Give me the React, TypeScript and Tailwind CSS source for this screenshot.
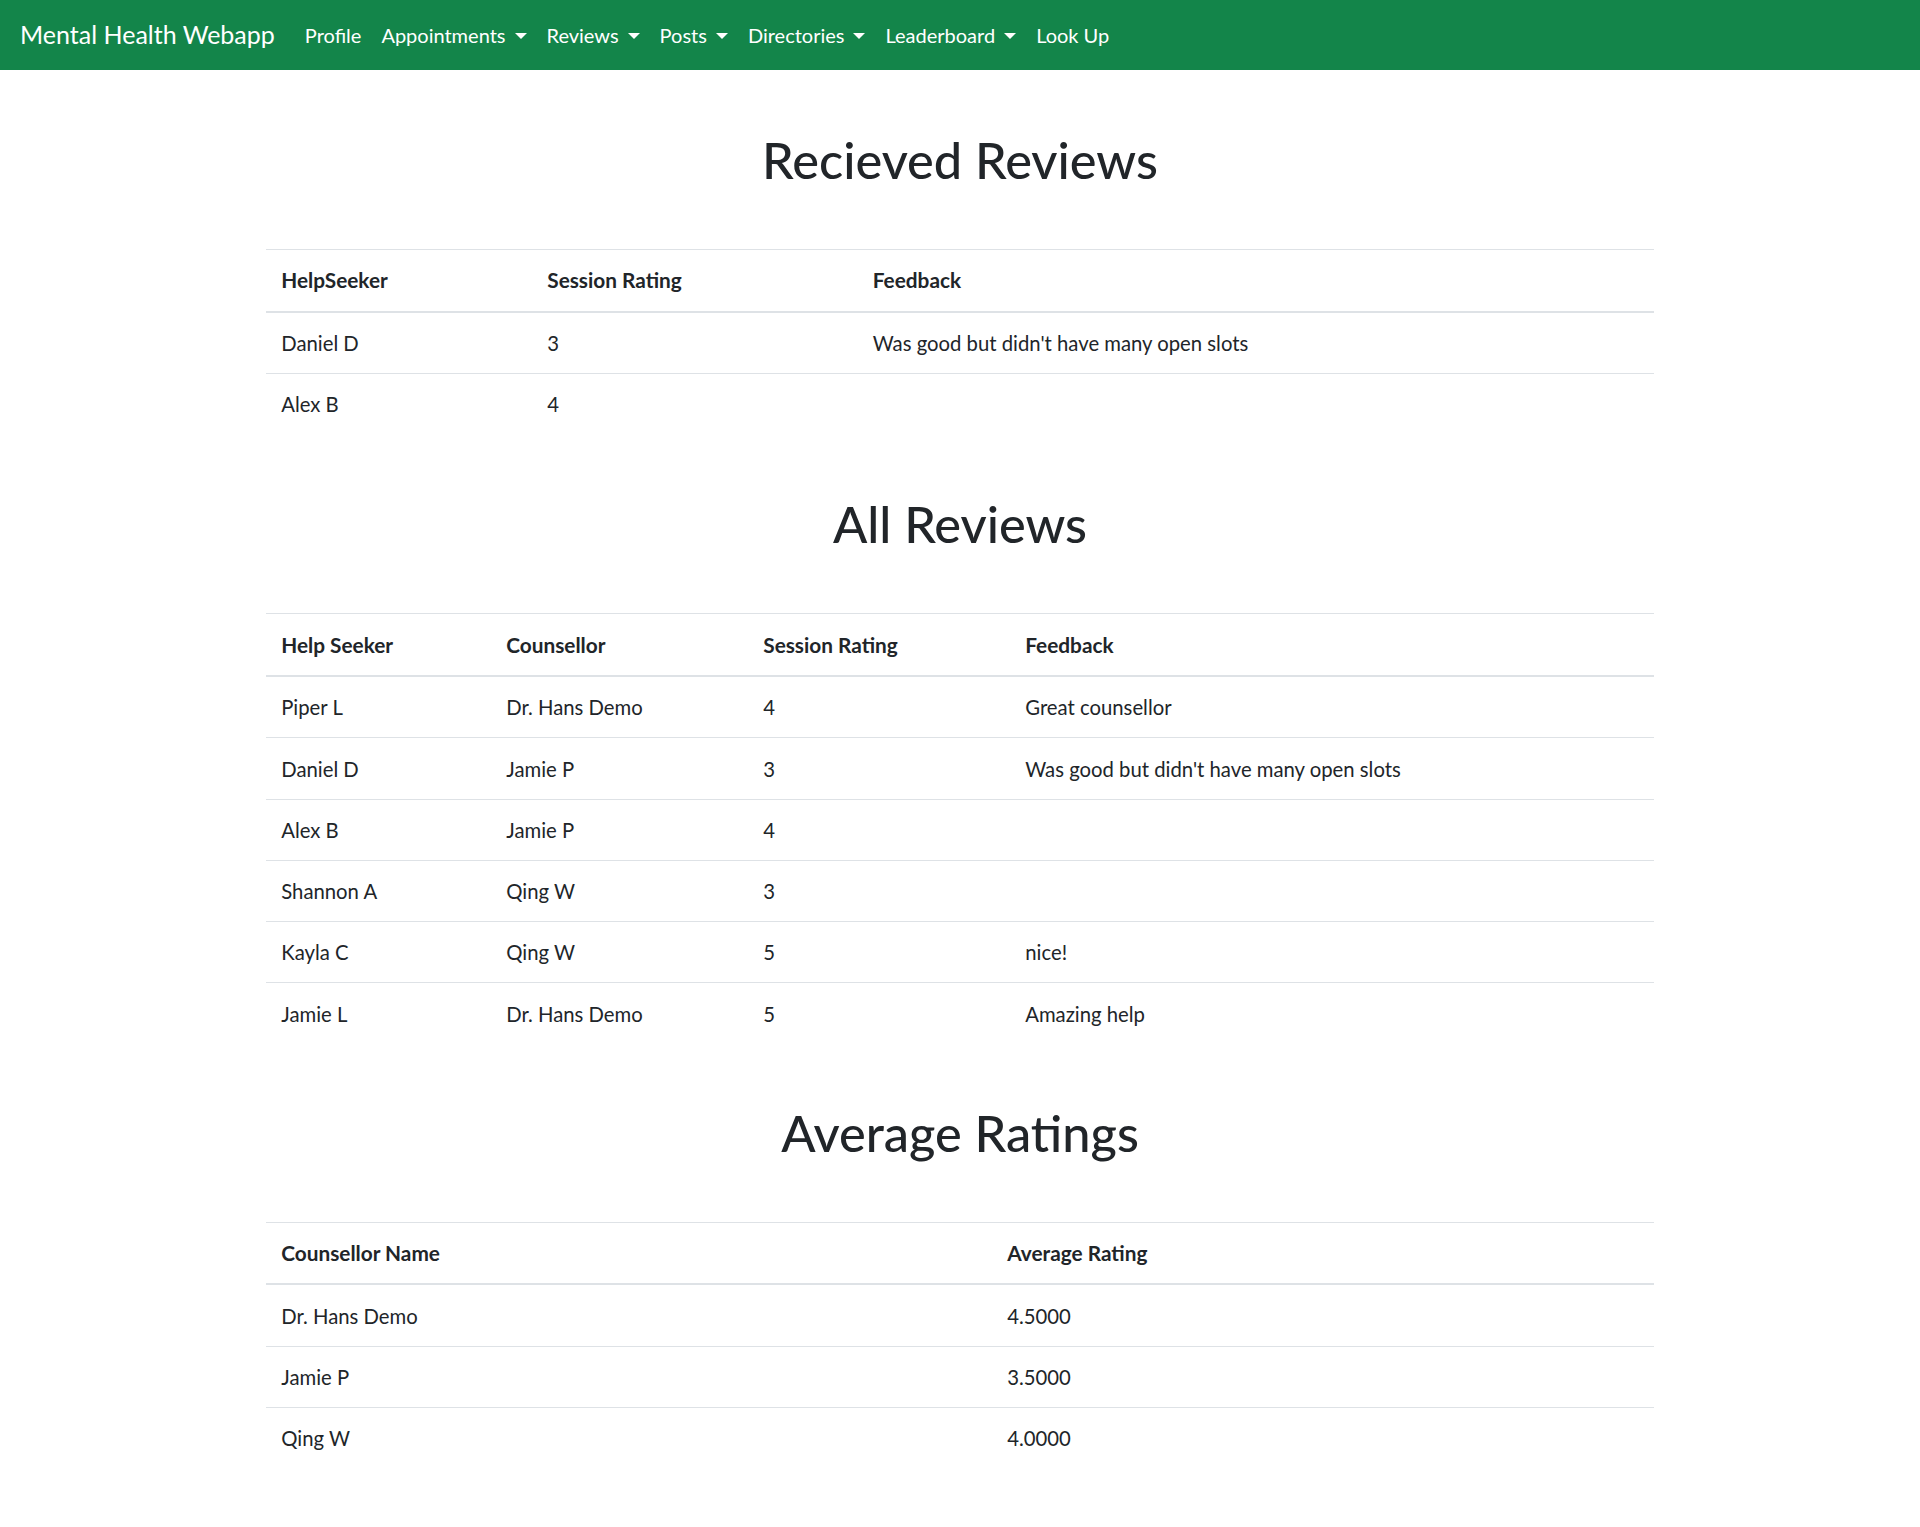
import React from 'react';

type NavLinkProps = {
  title: string;
  dropdown?: boolean;
};

const NavLink = ({ title, dropdown }: NavLinkProps) => {
  return (
    <li>
      <a href="#" className="flex items-center px-[10px] py-[10px] text-[20px] leading-[30px] text-white">
        {title}
        {dropdown && (
          <span className="ml-[9px] mt-[2px] inline-block h-0 w-0 border-x-[6px] border-t-[6px] border-x-transparent border-t-white"></span>
        )}
      </a>
    </li>
  );
};

type Column = { title: string; width?: string };

type ReviewTableProps = {
  columns: Column[];
  rows: string[][];
};

const ReviewTable = ({ columns, rows }: ReviewTableProps) => {
  return (
    <table className="w-full table-fixed border-collapse text-left text-[20.3px] leading-[30px] text-[#212529]">
      <thead>
        <tr>
          {columns.map((col) => (
            <th
              key={col.title}
              className={`border-t border-b-2 border-t-[#dee2e6] border-b-[#dee2e6] px-[15px] py-[15.375px] text-[20.8px] font-bold ${col.width ?? ''}`}
            >
              {col.title}
            </th>
          ))}
        </tr>
      </thead>
      <tbody>
        {rows.map((row, i) => (
          <tr key={i}>
            {row.map((cell, j) => (
              <td key={j} className="border-t border-t-[#dee2e6] px-[15px] pt-[15.25px] pb-[15px] font-normal">
                {cell}
              </td>
            ))}
          </tr>
        ))}
      </tbody>
    </table>
  );
};

const Heading = ({ children }: { children: React.ReactNode }) => (
  <h1 className="mb-[59px] text-center text-[50.5px] font-medium leading-[60px] text-[#212529]">{children}</h1>
);

const App = () => {
  const navItems = [
    { title: 'Profile' },
    { title: 'Appointments', dropdown: true },
    { title: 'Reviews', dropdown: true },
    { title: 'Posts', dropdown: true },
    { title: 'Directories', dropdown: true },
    { title: 'Leaderboard', dropdown: true },
    { title: 'Look Up' },
  ];

  return (
    <div className="min-h-[1527px] bg-white font-['Lato','Noto_Sans',sans-serif]">
      <nav className="flex h-[70px] items-center bg-[#13854a] px-[20px] py-[10px]">
        <a href="#" className="mr-[20px] py-[6.25px] text-[25px] leading-[37.5px] text-white">
          Mental Health Webapp
        </a>
        <ul className="flex items-center">
          {navItems.map((item) => (
            <NavLink key={item.title} title={item.title} dropdown={item.dropdown} />
          ))}
        </ul>
      </nav>

      <main className="mx-auto w-[1387.5px] pt-[60px]">
        <section>
          <Heading>Recieved Reviews</Heading>
          <ReviewTable
            columns={[
              { title: 'HelpSeeker', width: 'w-[266px]' },
              { title: 'Session Rating', width: 'w-[325.5px]' },
              { title: 'Feedback' },
            ]}
            rows={[
              ['Daniel D', '3', "Was good but didn't have many open slots"],
              ['Alex B', '4', ''],
            ]}
          />
        </section>

        <section className="mt-[60px]">
          <Heading>All Reviews</Heading>
          <ReviewTable
            columns={[
              { title: 'Help Seeker', width: 'w-[225px]' },
              { title: 'Counsellor', width: 'w-[257px]' },
              { title: 'Session Rating', width: 'w-[262px]' },
              { title: 'Feedback' },
            ]}
            rows={[
              ['Piper L', 'Dr. Hans Demo', '4', 'Great counsellor'],
              ['Daniel D', 'Jamie P', '3', "Was good but didn't have many open slots"],
              ['Alex B', 'Jamie P', '4', ''],
              ['Shannon A', 'Qing W', '3', ''],
              ['Kayla C', 'Qing W', '5', 'nice!'],
              ['Jamie L', 'Dr. Hans Demo', '5', 'Amazing help'],
            ]}
          />
        </section>

        <section className="mt-[59px]">
          <Heading>Average Ratings</Heading>
          <ReviewTable
            columns={[
              { title: 'Counsellor Name', width: 'w-[726px]' },
              { title: 'Average Rating' },
            ]}
            rows={[
              ['Dr. Hans Demo', '4.5000'],
              ['Jamie P', '3.5000'],
              ['Qing W', '4.0000'],
            ]}
          />
        </section>
      </main>
    </div>
  );
};

export default App;
